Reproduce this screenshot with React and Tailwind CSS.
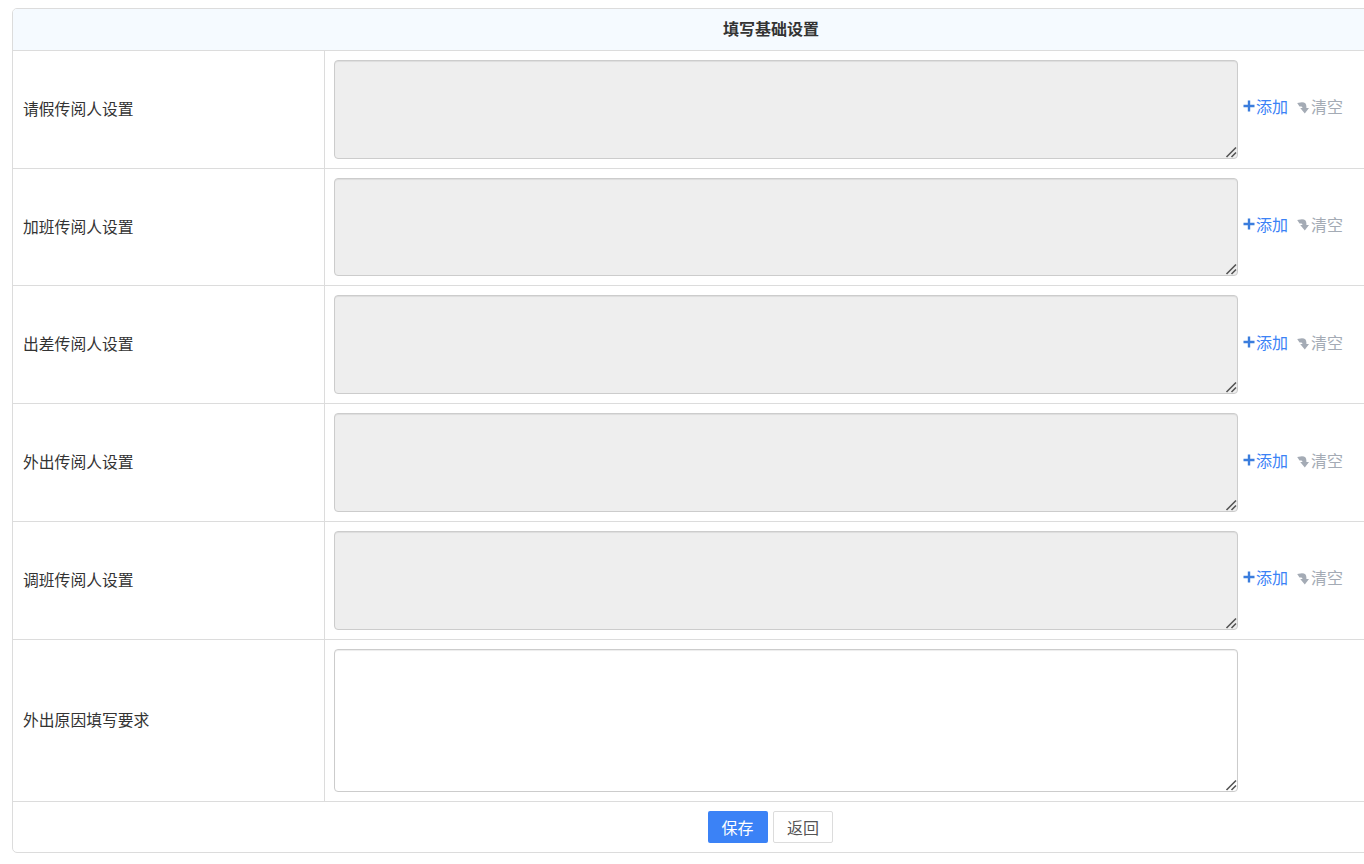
const rows = [
  { label: "请假传阅人设置", h: "h-[118px]", ta: "h-[99px]", link: "-mt-[16px]" },
  { label: "加班传阅人设置", h: "h-[117px]", ta: "h-[98px]", link: "-mt-[16px]" },
  { label: "出差传阅人设置", h: "h-[118px]", ta: "h-[99px]", link: "-mt-[14px]" },
  { label: "外出传阅人设置", h: "h-[118px]", ta: "h-[99px]", link: "-mt-[14px]" },
  { label: "调班传阅人设置", h: "h-[118px]", ta: "h-[99px]", link: "-mt-[16px]" },
];

function Plus() {
  return (
    <svg width="12" height="12" viewBox="0 0 12 12" className="shrink-0">
      <path d="M4.8 0.5h2.4v4.3h4.3v2.4H7.2v4.3H4.8V7.2H0.5V4.8h4.3z" fill="#3b7ddd" />
    </svg>
  );
}

function Clear() {
  return (
    <svg width="12" height="12" viewBox="0 0 12 12" className="shrink-0 mt-[3px]">
      <path d="M0.2 1 L5 0.2 Q9.4 0.2 9.4 4.5 V6 H12 L7.8 11.5 L3.2 6 H5.4 V5.8 Q5.4 4.4 4 4.4 L2.5 4.4 Z" fill="#a4abb5" />
    </svg>
  );
}

function Grip() {
  return (
    <svg width="12" height="12" viewBox="0 0 12 12" className="absolute right-[1px] bottom-[1px] pointer-events-none">
      <path d="M1.5 11 L11 1.5 M6.5 11 L11 6.5" stroke="#555" strokeWidth="1.6" fill="none" />
    </svg>
  );
}

function Area({ className }) {
  return (
    <div className="relative w-[904px]">
      <textarea className={`block w-full resize-none rounded-[4px] border border-[#cccccc] shadow-[inset_0_1px_1px_rgba(0,0,0,0.075)] ${className}`} />
      <Grip />
    </div>
  );
}

function Row({ label, h, ta, link }) {
  return (
    <div className={`flex ${h} border-b border-[#dcdcdc]`}>
      <div className="w-[312px] shrink-0 border-r border-[#dcdcdc] pl-[10px] pb-[1px] flex items-center text-[15.8px] text-[#333]">
        {label}
      </div>
      <div className="flex pl-[9px] pt-[9px] items-start">
        <Area className={`${ta} bg-[#eeeeee]`} />
        <div className={`flex items-center self-center ${link} ml-[5px]`}>
          <Plus />
          <span className="text-[#3b82f6] ml-[1px]">添加</span>
          <span className="ml-[9px] flex items-center text-[#a4abb5]">
            <Clear />
            <span className="ml-[2px]">清空</span>
          </span>
        </div>
      </div>
    </div>
  );
}

export default function App() {
  return (
    <div className="h-[864px] w-[1364px] overflow-hidden bg-white pl-3 pt-2 text-[16px] leading-[24px] font-['Noto_Sans_CJK_SC',sans-serif]">
      <div className="w-[1518px] h-[845px] rounded-[5px] border border-[#dcdcdc] overflow-hidden">
        <div className="h-[42px] bg-[#f5faff] border-b border-[#dcdcdc] flex items-center justify-center pb-[4px] font-bold text-[#333]">
          填写基础设置
        </div>
        {rows.map((r) => (
          <Row key={r.label} {...r} />
        ))}
        <div className="flex h-[162px] border-b border-[#dcdcdc]">
          <div className="w-[312px] shrink-0 border-r border-[#dcdcdc] pl-[10px] pb-[1px] flex items-center text-[15.8px] text-[#333]">
            外出原因填写要求
          </div>
          <div className="pl-[9px] pt-[9px]">
            <Area className="h-[143px] bg-white" />
          </div>
        </div>
        <div className="flex justify-center gap-[5px] pt-[9px] pr-[2px]">
          <button className="w-[60px] h-[32px] rounded-[2px] bg-[#3b82f6] text-white">保存</button>
          <button className="w-[60px] h-[32px] rounded-[2px] border border-[#dcdcdc] bg-white pl-[1px] text-[#555]">返回</button>
        </div>
      </div>
    </div>
  );
}
